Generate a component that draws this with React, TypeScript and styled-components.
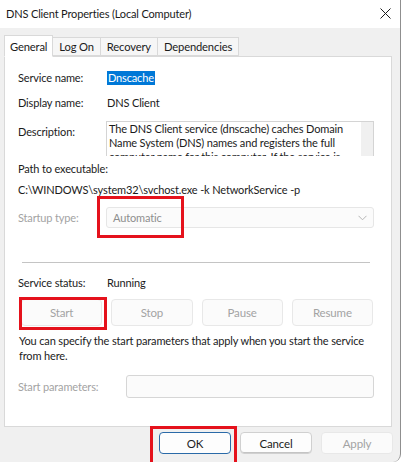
import styled, { createGlobalStyle } from "styled-components";
import { FC, ReactNode } from "react";

const GlobalStyle = createGlobalStyle`
  html, body {
    margin: 0;
    padding: 0;
    background: #ffffff;
  }
  body {
    font-family: "Lato", "Liberation Sans", sans-serif;
    font-size: 11px;
    letter-spacing: -0.15px;
    color: #1b1b1b;
  }
`;

const StyledWindow = styled.div`
  width: 400px;
  height: 462px;
  background-color: #f0f0f0;
  border-right: 1px solid #8f8f8f;
  border-bottom-right-radius: 8px;
  display: flex;
  flex-flow: column nowrap;
  overflow: hidden;
`;

const StyledTitleBar = styled.div`
  height: 26px;
  background-color: #ffffff;
  display: flex;
  flex-flow: row nowrap;
  align-items: center;
  justify-content: space-between;
  padding: 0 9px 2px 6px;
  flex: none;
`;

const StyledTitle = styled.span`
  font-size: 11px;
  color: #1a1a1a;
`;

const StyledTabStrip = styled.div`
  display: flex;
  flex-flow: row nowrap;
  align-items: flex-end;
  margin: 6px 0 0 4px;
  height: 22px;
  position: relative;
  z-index: 1;
`;

interface TabProps {
  selected?: boolean;
}

const StyledTab = styled.div<TabProps>`
  height: ${({ selected }) => (selected ? "22px" : "19px")};
  padding: 0 ${({ selected }) => (selected ? "5px" : "6px")};
  margin-bottom: ${({ selected }) => (selected ? "-1px" : "0")};
  background-color: ${({ selected }) => (selected ? "#ffffff" : "#f6f6f6")};
  border: 1px solid #d9d9d9;
  border-bottom: ${({ selected }) =>
    selected ? "1px solid #ffffff" : "1px solid #d9d9d9"};
  border-left: ${({ selected }) => (selected ? "1px solid #d9d9d9" : "none")};
  box-sizing: border-box;
  display: flex;
  align-items: center;
  font-size: 11.2px;
  color: #1b1b1b;
  &:first-child {
    border-left: 1px solid #d9d9d9;
  }
`;

const StyledPanel = styled.div`
  margin: 0 8px 0 4px;
  height: 371px;
  box-sizing: border-box;
  background-color: #ffffff;
  border: 1px solid #d9d9d9;
  padding: 13px 17px 0 13px;
  display: flex;
  flex-flow: column nowrap;
`;

interface FieldRowProps {
  top: number;
  align?: string;
}

const StyledFieldRow = styled.div<FieldRowProps>`
  display: grid;
  grid-template-columns: 88px 1fr;
  align-items: ${({ align }) => align || "center"};
  margin-top: ${({ top }) => top}px;
  min-height: 16px;
`;

interface LabelProps {
  disabled?: boolean;
  offset?: number;
}

const StyledLabel = styled.span<LabelProps>`
  line-height: 16px;
  margin-top: ${({ offset }) => offset || 0}px;
  color: ${({ disabled }) => (disabled ? "#a3a3a3" : "#1b1b1b")};
`;

const StyledValue = styled.span`
  line-height: 16px;
  padding-left: 1px;
`;

const StyledSelectedValue = styled.span`
  justify-self: start;
  margin-left: 1px;
  background-color: #0078d7;
  color: #ffffff;
  line-height: 14px;
  padding: 0 1px;
`;

const StyledDescriptionBox = styled.div`
  height: 35px;
  box-sizing: border-box;
  border: 1px solid #d4d4d4;
  border-bottom: none;
  display: flex;
  flex-flow: row nowrap;
  overflow: hidden;
`;

const StyledDescriptionText = styled.p`
  margin: 0;
  flex: 1;
  padding: 0 4px 0 2px;
  line-height: 14px;
`;

const StyledScrollTrack = styled.div`
  width: 12px;
  background-color: #f0f0f0;
  flex: none;
`;

const StyledPlainLine = styled.div<FieldRowProps>`
  margin-top: ${({ top }) => top}px;
  line-height: 16px;
  white-space: nowrap;
`;

const StyledCombo = styled.div`
  position: relative;
  height: 21px;
  box-sizing: border-box;
  border: 1px solid #e6e6e6;
  border-radius: 3px;
  background-color: #fbfbfb;
  display: flex;
  flex-flow: row nowrap;
  align-items: center;
  justify-content: space-between;
  padding: 0 6px 0 6px;
  color: #8e8e8e;
`;

interface MarkerProps {
  left: number;
  top: number;
  width: number;
  height: number;
}

const StyledMarker = styled.span<MarkerProps>`
  position: absolute;
  left: ${({ left }) => left}px;
  top: ${({ top }) => top}px;
  width: ${({ width }) => width}px;
  height: ${({ height }) => height}px;
  box-sizing: border-box;
  border: 3px solid #e5121c;
  pointer-events: none;
`;

const StyledSeparator = styled.hr`
  margin: 34px 4px 0 4px;
  border: none;
  border-top: 1px solid #c4c4c4;
  height: 0;
`;

const StyledControlRow = styled.div`
  display: grid;
  grid-template-columns: repeat(4, 1fr);
  column-gap: 9px;
  margin: 8px 1px 0 3px;
`;

interface ButtonProps {
  disabled?: boolean;
  focused?: boolean;
}

const StyledButton = styled.div<ButtonProps>`
  position: relative;
  box-sizing: border-box;
  display: flex;
  align-items: center;
  justify-content: center;
  border-radius: 4px;
  background-color: ${({ disabled }) => (disabled ? "#fbfbfb" : "#fdfdfd")};
  border: 1px solid
    ${({ disabled, focused }) =>
      focused ? "#2a6aa8" : disabled ? "#e8e8e8" : "#d0d0d0"};
  box-shadow: ${({ disabled, focused }) =>
    disabled || focused ? "none" : "inset 0 -1px 0 #c4c4c4"};
  color: ${({ disabled }) => (disabled ? "#a3a3a3" : "#1b1b1b")};
  font-size: 11.5px;
`;

const StyledControlButton = styled(StyledButton)`
  height: 27px;
`;

const StyledHint = styled.p`
  margin: 7px 0 0 1px;
  line-height: 15px;
`;

const StyledInput = styled.div`
  height: 23px;
  box-sizing: border-box;
  border: 1px solid #d6d6d6;
  border-radius: 3px;
  background-color: #fbfbfb;
`;

const StyledParamsRow = styled.div`
  display: grid;
  grid-template-columns: 108px 1fr;
  align-items: center;
  margin-top: 12px;
`;

const StyledFooter = styled.div`
  display: flex;
  flex-flow: row nowrap;
  justify-content: flex-end;
  gap: 9px;
  padding: 5px 7px 0 0;
`;

const StyledFooterButton = styled(StyledButton)`
  width: 72px;
  height: 22px;
`;

const CloseIcon: FC = () => (
  <svg width="11" height="11" viewBox="0 0 11 11" fill="none">
    <path d="M0.5 0.5L10.5 10.5M10.5 0.5L0.5 10.5" stroke="#1b1b1b" strokeWidth="1" />
  </svg>
);

const ChevronIcon: FC = () => (
  <svg width="9" height="6" viewBox="0 0 9 6" fill="none">
    <path d="M0.5 0.8L4.5 4.8L8.5 0.8" stroke="#b5b5b5" strokeWidth="1" />
  </svg>
);

interface FieldProps {
  label: string;
  top: number;
  disabled?: boolean;
  align?: string;
  labelOffset?: number;
  children: ReactNode;
}

const Field: FC<FieldProps> = ({
  label,
  top,
  disabled,
  align,
  labelOffset,
  children,
}) => (
  <StyledFieldRow top={top} align={align}>
    <StyledLabel disabled={disabled} offset={labelOffset}>
      {label}
    </StyledLabel>
    {children}
  </StyledFieldRow>
);

const tabs = ["General", "Log On", "Recovery", "Dependencies"];
const controls = ["Start", "Stop", "Pause", "Resume"];

export default function App() {
  return (
    <>
      <GlobalStyle />
      <StyledWindow>
        <StyledTitleBar>
          <StyledTitle>DNS Client Properties (Local Computer)</StyledTitle>
          <CloseIcon />
        </StyledTitleBar>

        <StyledTabStrip>
          {tabs.map((tab, i) => (
            <StyledTab key={tab} selected={i === 0}>
              {tab}
            </StyledTab>
          ))}
        </StyledTabStrip>

        <StyledPanel>
          <Field label="Service name:" top={0}>
            <StyledSelectedValue>Dnscache</StyledSelectedValue>
          </Field>

          <Field label="Display name:" top={9}>
            <StyledValue>DNS Client</StyledValue>
          </Field>

          <Field label="Description:" top={10} align="start" labelOffset={3}>
            <StyledDescriptionBox>
              <StyledDescriptionText>
                The DNS Client service (dnscache) caches Domain Name System
                (DNS) names and registers the full computer name for this
                computer. If the service is
              </StyledDescriptionText>
              <StyledScrollTrack />
            </StyledDescriptionBox>
          </Field>

          <StyledPlainLine top={5}>Path to executable:</StyledPlainLine>
          <StyledPlainLine top={5}>
            C:\WINDOWS\system32\svchost.exe -k NetworkService -p
          </StyledPlainLine>

          <Field label="Startup type:" top={9} disabled>
            <StyledCombo>
              <span>Automatic</span>
              <ChevronIcon />
              <StyledMarker left={-10} top={-12} width={87} height={42} />
            </StyledCombo>
          </Field>

          <StyledSeparator />

          <Field label="Service status:" top={12}>
            <StyledValue>Running</StyledValue>
          </Field>

          <StyledControlRow>
            {controls.map((name, i) => (
              <StyledControlButton key={name} disabled>
                {name}
                {i === 0 && (
                  <StyledMarker left={-3} top={-3} width={88} height={33} />
                )}
              </StyledControlButton>
            ))}
          </StyledControlRow>

          <StyledHint>
            You can specify the start parameters that apply when you start the
            service from here.
          </StyledHint>

          <StyledParamsRow>
            <StyledLabel disabled>Start parameters:</StyledLabel>
            <StyledInput />
          </StyledParamsRow>
        </StyledPanel>

        <StyledFooter>
          <StyledFooterButton focused>
            OK
            <StyledMarker left={-10} top={-7} width={87} height={40} />
          </StyledFooterButton>
          <StyledFooterButton>Cancel</StyledFooterButton>
          <StyledFooterButton disabled>Apply</StyledFooterButton>
        </StyledFooter>
      </StyledWindow>
    </>
  );
}
